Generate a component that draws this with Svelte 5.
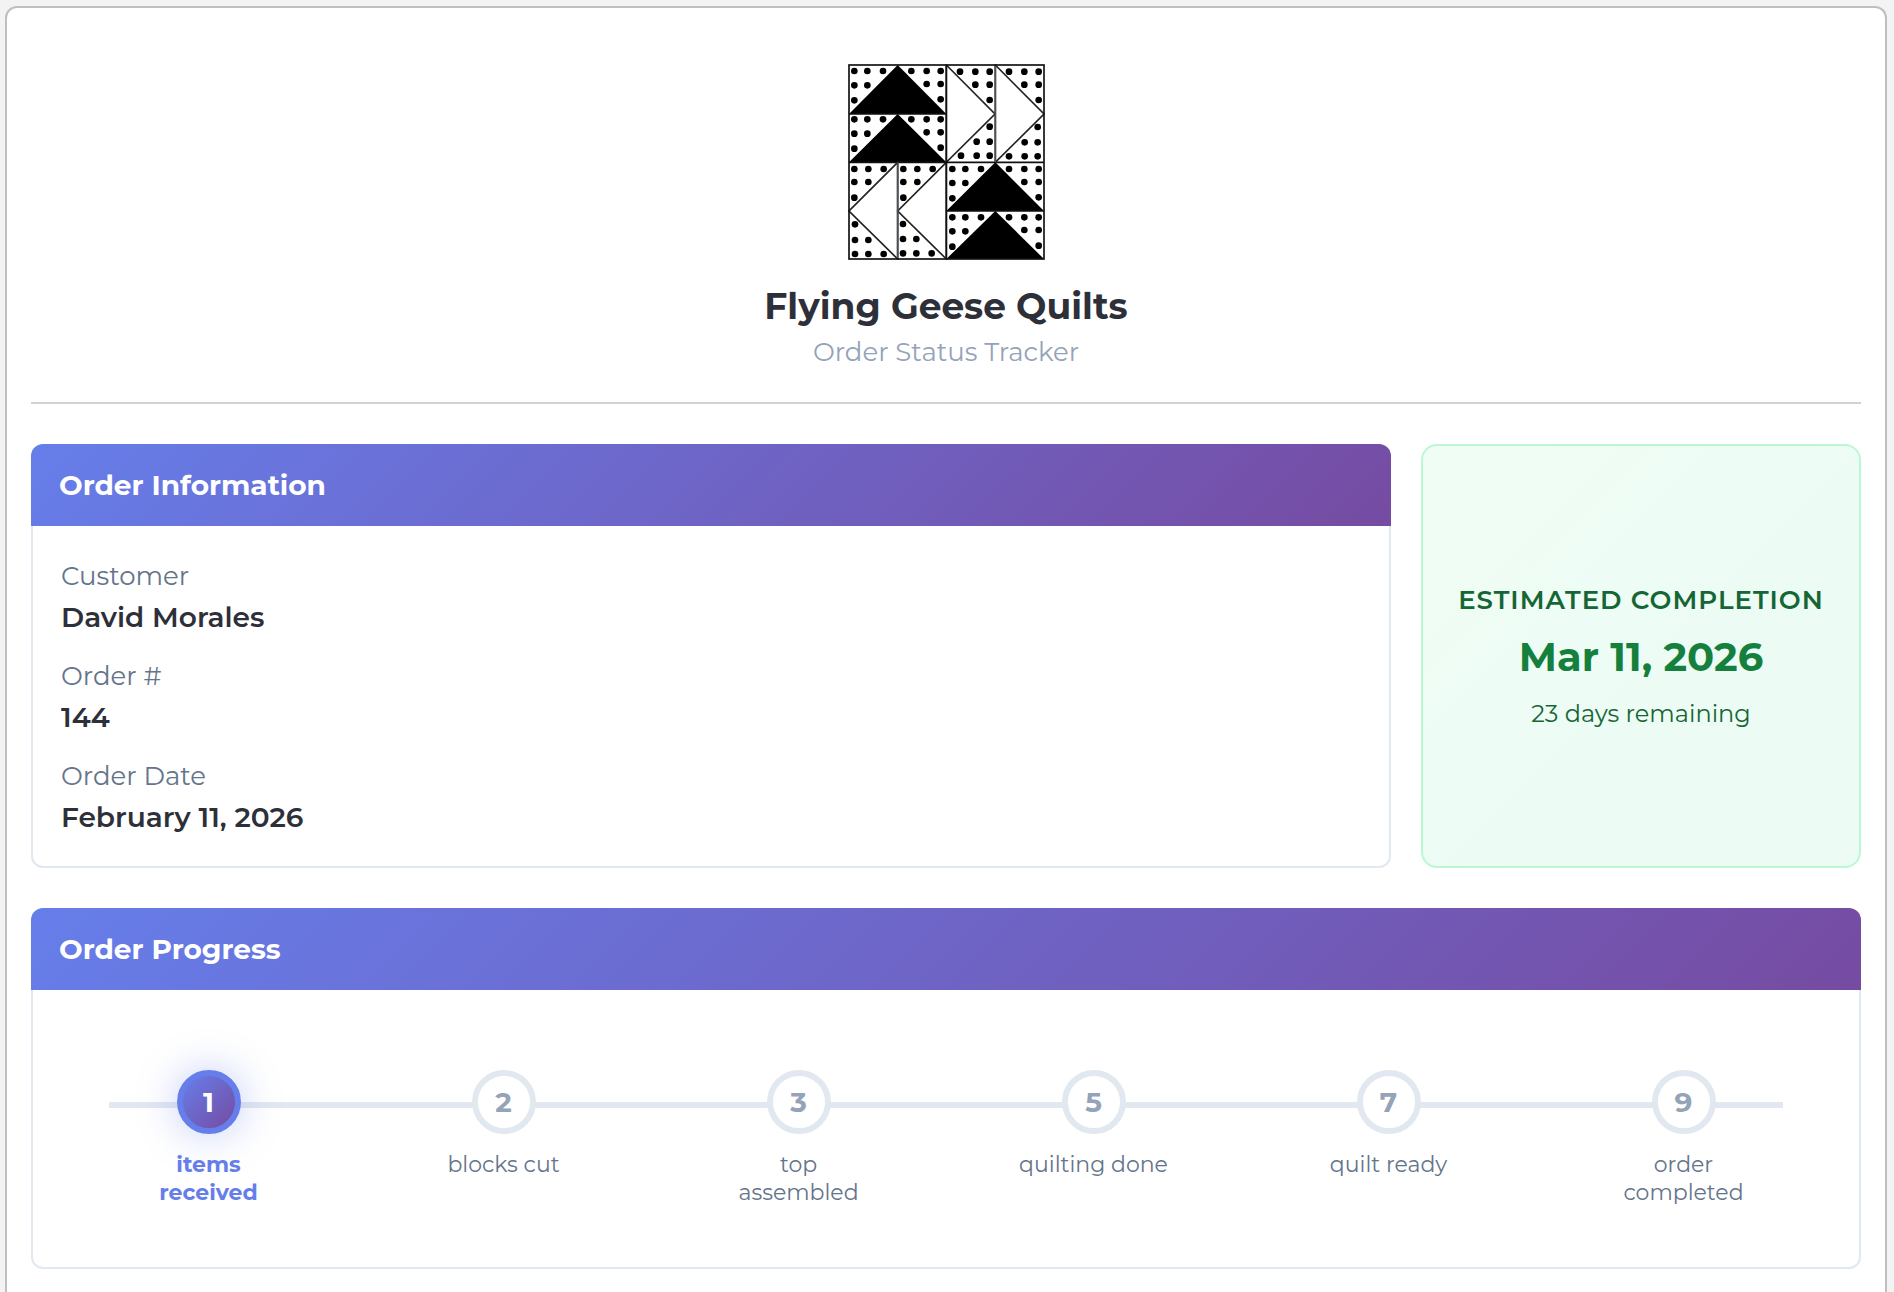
<script lang="ts">
  const order = [
    { label: 'Customer', value: 'David Morales' },
    { label: 'Order #', value: '144' },
    { label: 'Order Date', value: 'February 11, 2026' }
  ];

  const steps = [
    { number: 1, name: 'items received' },
    { number: 2, name: 'blocks cut' },
    { number: 3, name: 'top assembled' },
    { number: 5, name: 'quilting done' },
    { number: 7, name: 'quilt ready' },
    { number: 9, name: 'order completed' }
  ];

  let current = $state(1);

  // fabric dots, quadrant by quadrant
  const dots = [
    [44, 48], [83, 48], [130, 48], [44, 91], [83, 91], [44, 136],
    [215, 48], [261, 48], [303, 48], [261, 87], [303, 87], [303, 133],
    [44, 193], [83, 193], [130, 193], [44, 236], [83, 236], [44, 281],
    [215, 193], [261, 193], [303, 193], [261, 232], [303, 232], [303, 278],
    [361, 50], [407, 50], [450, 50], [407, 89], [450, 89], [450, 135],
    [450, 215], [411, 260], [450, 260], [364, 302], [411, 302], [450, 302],
    [508, 50], [554, 50], [597, 50], [554, 89], [597, 89], [597, 135],
    [594, 216], [555, 262], [594, 262], [508, 304], [555, 304], [594, 304],
    [44, 342], [86, 342], [132, 342], [44, 381], [86, 381], [44, 428],
    [46, 508], [46, 555], [86, 555], [46, 597], [86, 597], [132, 597],
    [191, 342], [233, 342], [279, 342], [191, 381], [233, 381], [191, 428],
    [190, 507], [190, 552], [230, 552], [190, 595], [230, 595], [276, 595],
    [338, 342], [377, 342], [424, 342], [338, 384], [377, 384], [338, 430],
    [508, 342], [554, 342], [597, 342], [554, 381], [597, 381], [597, 427],
    [338, 487], [377, 487], [424, 487], [338, 529], [377, 529], [338, 575],
    [508, 487], [554, 487], [597, 487], [554, 525], [597, 525], [597, 572]
  ];
</script>

<main class="tracker">
  <header class="brand">
    <svg class="logo" viewBox="25 27 591 588" role="img" aria-label="Flying Geese quilt block">
      <rect x="28" y="30" width="585" height="582" fill="#fff" />
      {#each dots as [x, y]}
        <circle cx={x} cy={y} r="10" />
      {/each}
      <g>
        <path d="M28 177 174 30 320 177Z" />
        <path d="M28 322 174 177 320 322Z" />
        <path d="M320 468 467 322 613 468Z" />
        <path d="M320 612 467 468 613 612Z" />
      </g>
      <g fill="#fff" stroke="#222" stroke-width="5">
        <path d="M320 30 466 177 320 322Z" />
        <path d="M467 30 613 177 467 322Z" />
        <path d="M174 322 28 468 174 612Z" />
        <path d="M320 322 174 468 320 612Z" />
      </g>
      <g fill="none" stroke="#111" stroke-width="5">
        <path d="M28 177H320M28 322H613M320 468H613M320 30V612" />
        <path d="M467 30V322M174 322V612" stroke="#4b5055" />
        <rect x="28" y="30" width="585" height="582" />
      </g>
    </svg>
    <h1>Flying Geese Quilts</h1>
    <p>Order Status Tracker</p>
  </header>

  <div class="overview">
    <section class="card">
      <h2>Order Information</h2>
      <dl class="card-body info">
        {#each order as item}
          <div>
            <dt>{item.label}</dt>
            <dd>{item.value}</dd>
          </div>
        {/each}
      </dl>
    </section>

    <section class="estimate">
      <p class="estimate-label">Estimated Completion</p>
      <p class="estimate-date">Mar 11, 2026</p>
      <p class="estimate-days">23 days remaining</p>
    </section>
  </div>

  <section class="card">
    <h2>Order Progress</h2>
    <div class="card-body progress">
      <ol class="steps">
        {#each steps as step}
          <li class:active={step.number === current} aria-current={step.number === current ? 'step' : undefined}>
            <span class="circle">{step.number}</span>
            <span class="name">{step.name}</span>
          </li>
        {/each}
      </ol>
    </div>
  </section>
</main>

<style>
  :global(body) {
    background: #f3f3f3;
    font-family: Montserrat, Inter, 'Open Sans', sans-serif;
    color: #2d3039;
  }
  :global(#app) {
    display: flow-root;
  }
  h1,
  h2,
  p,
  dl,
  dd,
  ol {
    margin: 0;
    padding: 0;
  }
  .tracker {
    margin: 6px 7px 0 5px;
    padding: 56px 24px 23px;
    border: 2px solid #bfbfc0;
    border-bottom: none;
    border-radius: 12px 12px 0 0;
    background: #fff;
  }

  .brand {
    display: flex;
    flex-direction: column;
    align-items: center;
    padding-bottom: 32px;
    margin-bottom: 40px;
    border-bottom: 2px solid #ced3d7;
    text-align: center;
  }
  .logo {
    width: 197px;
    height: 196px;
    margin-bottom: 24px;
  }
  h1 {
    font-size: 36px;
    line-height: 44px;
    font-weight: 700;
  }
  .brand p {
    margin-top: 6px;
    font-size: 26px;
    line-height: 36px;
    color: #94a3b8;
  }

  .overview {
    display: grid;
    grid-template-columns: 1fr 440px;
    gap: 30px;
    margin-bottom: 40px;
  }
  .card {
    display: flex;
    flex-direction: column;
  }
  h2 {
    padding: 23px 28px;
    border-radius: 12px 12px 0 0;
    background: linear-gradient(135deg, #667eea 0%, #764ba2 100%);
    color: #fff;
    font-size: 28px;
    line-height: 36px;
    font-weight: 700;
  }
  .card-body {
    flex: 1;
    border: 2px solid #e2e8f0;
    border-top: none;
    border-radius: 0 0 12px 12px;
  }
  .info {
    display: flex;
    flex-direction: column;
    gap: 21px;
    padding: 32px 28px 29px;
  }
  dt {
    margin-bottom: 3px;
    font-size: 26px;
    line-height: 36px;
    color: #64748b;
  }
  dd {
    font-size: 28px;
    line-height: 40px;
    font-weight: 600;
  }

  .estimate {
    display: flex;
    flex-direction: column;
    align-items: center;
    justify-content: center;
    gap: 14px;
    padding-top: 2px;
    border: 2px solid #bbf7d0;
    border-radius: 16px;
    background: linear-gradient(135deg, #f0fdf4 0%, #ecfcf5 60%);
    color: #166534;
    text-align: center;
  }
  .estimate-label {
    font-size: 26px;
    line-height: 36px;
    font-weight: 600;
    letter-spacing: 1px;
    text-transform: uppercase;
  }
  .estimate-date {
    font-size: 40px;
    line-height: 50px;
    font-weight: 700;
    color: #15803d;
  }
  .estimate-days {
    font-size: 24px;
    line-height: 36px;
  }

  .progress {
    padding: 80px 28px 60px;
  }
  .steps {
    position: relative;
    display: flex;
    list-style: none;
  }
  .steps::before {
    content: '';
    position: absolute;
    top: 32px;
    left: 48px;
    right: 48px;
    height: 6px;
    background: #e2e8f0;
  }
  li {
    position: relative;
    flex: 1;
    display: flex;
    flex-direction: column;
    align-items: center;
    gap: 17px;
  }
  .circle {
    box-sizing: border-box;
    display: grid;
    place-items: center;
    width: 64px;
    height: 64px;
    border: 6px solid #e2e8f0;
    border-radius: 50%;
    background: #fff;
    color: #94a3b8;
    font-size: 28px;
    font-weight: 700;
  }
  .name {
    max-width: 160px;
    font-size: 22px;
    line-height: 28px;
    color: #64748b;
    text-align: center;
  }
  .active .circle {
    border-color: #667eea;
    background: linear-gradient(135deg, #667eea 0%, #764ba2 100%);
    color: #fff;
    box-shadow: 0 0 40px rgba(102, 126, 234, 0.4);
  }
  .active .name {
    color: #667eea;
    font-weight: 700;
  }
</style>
